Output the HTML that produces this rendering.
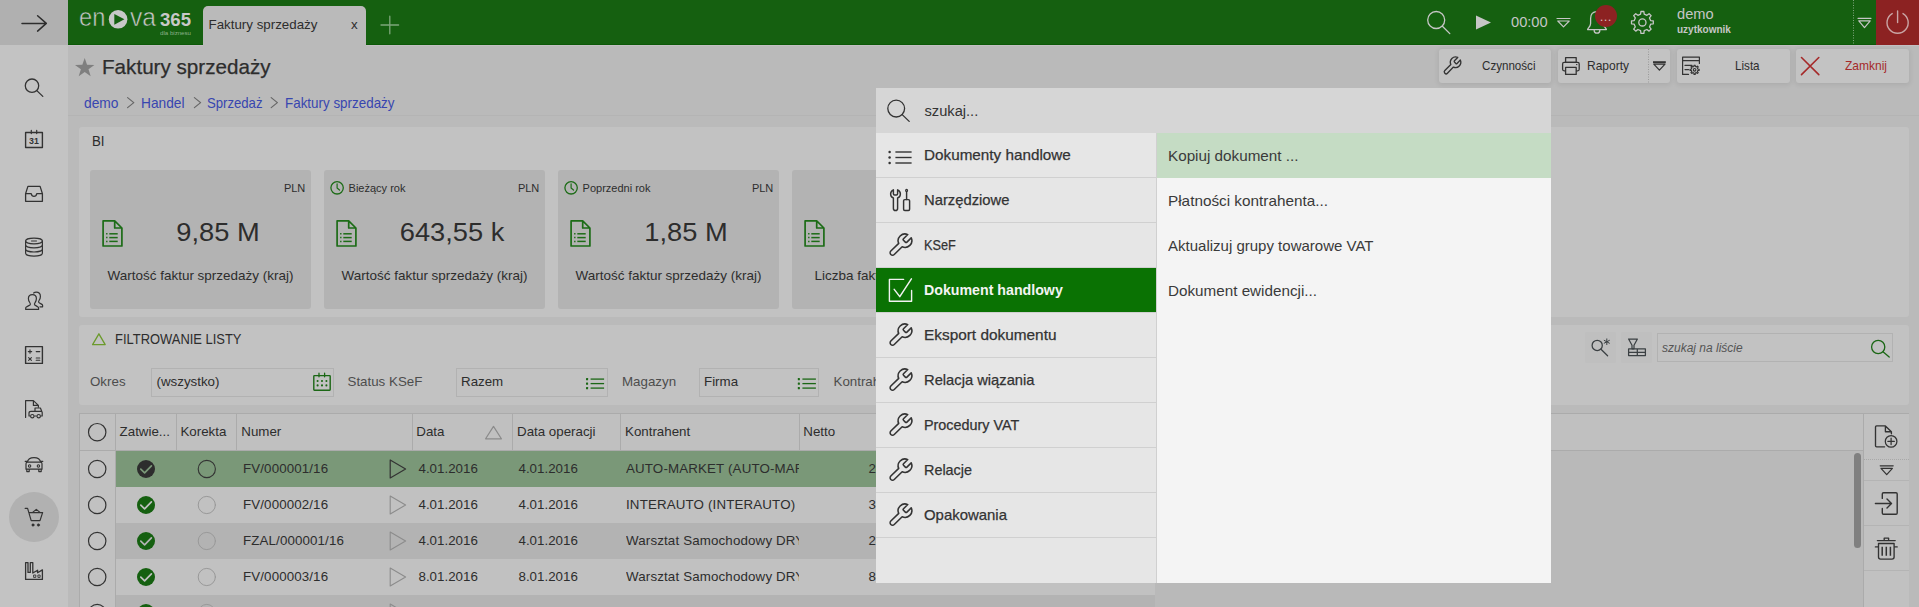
<!DOCTYPE html>
<html lang="pl">
<head>
<meta charset="utf-8">
<title>Faktury sprzedaży</title>
<style>
*{box-sizing:border-box;margin:0;padding:0}
html,body{width:1919px;height:607px;overflow:hidden;background:#bababa;font-family:"Liberation Sans",sans-serif;color:#2d2d2d}
svg{position:absolute;left:0;top:0;overflow:visible}
span,div{font-kerning:normal}
</style>
</head>
<body>
<div id="app" style="position:absolute;left:0;top:0;width:1919px;height:607px;overflow:hidden">
<div style="position:absolute;left:0px;top:0px;width:68px;height:45px;background:#b0b0b0;"></div>
<div style="position:absolute;left:0px;top:45px;width:68px;height:562px;background:#c3c3c3;"></div>
<div style="position:absolute;left:68px;top:0px;width:1851px;height:45px;background:#156010;"></div>
<div style="position:absolute;left:203px;top:6px;width:163px;height:39px;background:#bababa;border-radius:5px 5px 0 0;"></div>
<div style="position:absolute;left:1876px;top:0px;width:43px;height:45px;background:#8c2222;"></div>
<div style="position:absolute;left:68px;top:44px;width:135px;height:1px;background:#0c5908;"></div>
<div style="position:absolute;left:366px;top:44px;width:1510px;height:1px;background:#0c5908;"></div>
<div style="position:absolute;left:68px;top:45px;width:135px;height:1px;background:#c3c0c3;"></div>
<div style="position:absolute;left:366px;top:45px;width:1553px;height:1px;background:#c3c0c3;"></div>
<div style="position:absolute;left:9px;top:492px;width:50px;height:50px;background:#b1b1b1;border-radius:50%;"></div>
<div style="position:absolute;left:1439px;top:49px;width:112px;height:34px;background:#c3c3c3;border-radius:3px;box-shadow:0 1px 5px 1px rgba(0,0,0,0.08);"></div>
<div style="position:absolute;left:1558px;top:49px;width:112px;height:34px;background:#c3c3c3;border-radius:3px;box-shadow:0 1px 5px 1px rgba(0,0,0,0.08);"></div>
<div style="position:absolute;left:1677px;top:49px;width:113px;height:34px;background:#c3c3c3;border-radius:3px;box-shadow:0 1px 5px 1px rgba(0,0,0,0.08);"></div>
<div style="position:absolute;left:1796px;top:49px;width:113px;height:34px;background:#c3c3c3;border-radius:3px;box-shadow:0 1px 5px 1px rgba(0,0,0,0.08);"></div>
<div style="position:absolute;left:68px;top:115px;width:1851px;height:1px;background:#b4b4b4;"></div>
<div style="position:absolute;left:79px;top:127px;width:1830px;height:190px;background:#c2c2c2;border-radius:3px;"></div>
<div style="position:absolute;left:90px;top:170px;width:221px;height:138.6px;background:#b3b3b3;border-radius:3px;"></div>
<div style="position:absolute;left:324px;top:170px;width:221px;height:138.6px;background:#b3b3b3;border-radius:3px;"></div>
<div style="position:absolute;left:558px;top:170px;width:221px;height:138.6px;background:#b3b3b3;border-radius:3px;"></div>
<div style="position:absolute;left:792px;top:170px;width:221px;height:138.6px;background:#b3b3b3;border-radius:3px;"></div>
<div style="position:absolute;left:79px;top:325px;width:1830px;height:80px;background:#c2c2c2;border-radius:3px;"></div>
<div style="position:absolute;left:151px;top:368px;width:183px;height:29px;background:#c2c2c2;border:1px solid #b2b2b2;"></div>
<div style="position:absolute;left:456px;top:368px;width:152px;height:29px;background:#c2c2c2;border:1px solid #b2b2b2;"></div>
<div style="position:absolute;left:699px;top:368px;width:120px;height:29px;background:#c2c2c2;border:1px solid #b2b2b2;"></div>
<div style="position:absolute;left:1585px;top:332px;width:31px;height:31px;background:#bfbfbf;border-radius:2px;"></div>
<div style="position:absolute;left:1621px;top:332px;width:31px;height:31px;background:#bfbfbf;border-radius:2px;"></div>
<div style="position:absolute;left:1657px;top:333px;width:236px;height:29px;background:#c2c2c2;border:1px solid #b2b2b2;"></div>
<div style="position:absolute;left:79px;top:413px;width:1830px;height:194px;background:#c1c1c1;"></div>
<div style="position:absolute;left:116px;top:451px;width:1747px;height:156px;background:#b9b9b9;"></div>
<div style="position:absolute;left:80px;top:414px;width:1783px;height:36px;background:#c0c0c0;"></div>
<div style="position:absolute;left:116px;top:451px;width:1039px;height:36px;background:#7a9878;"></div>
<div style="position:absolute;left:116px;top:487px;width:1039px;height:36px;background:#c1c1c1;"></div>
<div style="position:absolute;left:116px;top:523px;width:1039px;height:36px;background:#b3b3b3;"></div>
<div style="position:absolute;left:116px;top:559px;width:1039px;height:36px;background:#c1c1c1;"></div>
<div style="position:absolute;left:116px;top:595px;width:1039px;height:36px;background:#b3b3b3;"></div>
<div style="position:absolute;left:79px;top:413px;width:1830px;height:1px;background:#ababab;"></div>
<div style="position:absolute;left:79px;top:413px;width:1px;height:194px;background:#ababab;"></div>
<div style="position:absolute;left:80px;top:450px;width:1783px;height:1px;background:#ababab;"></div>
<div style="position:absolute;left:1863px;top:413px;width:1px;height:194px;background:#ababab;"></div>
<div style="position:absolute;left:115px;top:414px;width:1px;height:36px;background:#ababab;"></div>
<div style="position:absolute;left:176px;top:414px;width:1px;height:36px;background:#ababab;"></div>
<div style="position:absolute;left:236px;top:414px;width:1px;height:36px;background:#ababab;"></div>
<div style="position:absolute;left:412px;top:414px;width:1px;height:36px;background:#ababab;"></div>
<div style="position:absolute;left:512px;top:414px;width:1px;height:36px;background:#ababab;"></div>
<div style="position:absolute;left:620px;top:414px;width:1px;height:36px;background:#ababab;"></div>
<div style="position:absolute;left:799px;top:414px;width:1px;height:36px;background:#ababab;"></div>
<div style="position:absolute;left:115px;top:451px;width:1px;height:156px;background:#ababab;"></div>
<div style="position:absolute;left:1864px;top:459px;width:45px;height:1px;background:transparent;border-top:1px dotted #a8a8a8;"></div>
<div style="position:absolute;left:1864px;top:480px;width:45px;height:1px;background:#b4b4b4;"></div>
<div style="position:absolute;left:1864px;top:525px;width:45px;height:1px;background:#b4b4b4;"></div>
<div style="position:absolute;left:1864px;top:570px;width:45px;height:1px;background:#b4b4b4;"></div>
<div style="position:absolute;left:1854px;top:453px;width:7px;height:95px;background:#808080;border-radius:3.5px;"></div>
<span id="t1" style="position:absolute;left:79px;top:5.34px;font-size:25px;line-height:1;white-space:nowrap;color:#c8c8c8;transform-origin:0 0;transform:scaleX(0.9492);-webkit-text-stroke:0.55px #156010;">en</span>
<span id="t2" style="position:absolute;left:130px;top:5.34px;font-size:25px;line-height:1;white-space:nowrap;color:#c8c8c8;transform-origin:0 0;transform:scaleX(0.9846);-webkit-text-stroke:0.55px #156010;">va</span>
<span id="t3" style="position:absolute;left:160px;top:11.09px;font-size:18.2px;line-height:1;white-space:nowrap;color:#c8c8c8;font-weight:700;transform-origin:0 0;transform:scaleX(1.0211);">365</span>
<span id="t4" style="position:absolute;left:160px;top:29.52px;font-size:6px;line-height:1;white-space:nowrap;color:#8db18a;transform-origin:0 0;transform:scaleX(1.0211);">dla biznesu</span>
<span id="t5" style="position:absolute;left:208.5px;top:17.72px;font-size:13.33px;line-height:1;white-space:nowrap;color:#2d2d2d;transform-origin:0 0;">Faktury sprzedaży</span>
<span id="t6" style="position:absolute;left:351px;top:17.72px;font-size:13.33px;line-height:1;white-space:nowrap;color:#2d2d2d;transform-origin:0 0;">x</span>
<span id="t7" style="position:absolute;left:1511px;top:15.18px;font-size:14.67px;line-height:1;white-space:nowrap;color:#c6c6c6;transform-origin:0 0;">00:00</span>
<span id="t8" style="position:absolute;left:1677px;top:7.48px;font-size:14.67px;line-height:1;white-space:nowrap;color:#c6c6c6;transform-origin:0 0;">demo</span>
<span id="t9" style="position:absolute;left:1677px;top:25.04px;font-size:10px;line-height:1;white-space:nowrap;color:#c6c6c6;font-weight:700;transform-origin:0 0;">uzytkownik</span>
<span id="t11" style="position:absolute;left:102.3px;top:56.56px;font-size:20.6px;line-height:1;white-space:nowrap;color:#2d2d2d;transform-origin:0 0;transform:scaleX(1.0021);-webkit-text-stroke:0.25px #2d2d2d;">Faktury sprzedaży</span>
<span id="t12" style="position:absolute;left:83.5px;top:95.73px;font-size:14.5px;line-height:1;white-space:nowrap;color:#3846b0;transform-origin:0 0;transform:scaleX(0.9509);">demo</span>
<span id="t13" style="position:absolute;left:141px;top:95.73px;font-size:14.5px;line-height:1;white-space:nowrap;color:#3846b0;transform-origin:0 0;transform:scaleX(0.9466);">Handel</span>
<span id="t14" style="position:absolute;left:207px;top:95.73px;font-size:14.5px;line-height:1;white-space:nowrap;color:#3846b0;transform-origin:0 0;transform:scaleX(0.9059);">Sprzedaż</span>
<span id="t15" style="position:absolute;left:285px;top:95.73px;font-size:14.5px;line-height:1;white-space:nowrap;color:#3846b0;transform-origin:0 0;transform:scaleX(0.9243);">Faktury sprzedaży</span>
<span id="t16" style="position:absolute;left:1481.5px;top:59.00px;font-size:13px;line-height:1;white-space:nowrap;color:#2d2d2d;transform-origin:0 0;transform:scaleX(0.8921);">Czynności</span>
<span id="t17" style="position:absolute;left:1587.2px;top:59.00px;font-size:13px;line-height:1;white-space:nowrap;color:#2d2d2d;transform-origin:0 0;transform:scaleX(0.9224);">Raporty</span>
<span id="t18" style="position:absolute;left:1734.5px;top:59.00px;font-size:13px;line-height:1;white-space:nowrap;color:#2d2d2d;transform-origin:0 0;transform:scaleX(0.8956);">Lista</span>
<span id="t19" style="position:absolute;left:1844.5px;top:59.00px;font-size:13px;line-height:1;white-space:nowrap;color:#a52a2a;transform-origin:0 0;transform:scaleX(0.9228);">Zamknij</span>
<span id="t20" style="position:absolute;left:91.8px;top:133.73px;font-size:14.5px;line-height:1;white-space:nowrap;color:#2d2d2d;transform-origin:0 0;transform:scaleX(0.9122);">BI</span>
<span id="t21" style="position:absolute;right:1613.7px;top:182.69px;font-size:11px;line-height:1;white-space:nowrap;color:#2d2d2d;transform-origin:100% 0;">PLN</span>
<div style="position:absolute;left:126px;top:218.72px;width:184px;text-align:center;font-size:26.67px;line-height:1;white-space:nowrap;color:#2d2d2d;transform:scaleX(1.022)">9,85 M</div>
<div style="position:absolute;left:90px;top:269.42px;width:221px;text-align:center;font-size:13.33px;line-height:1;white-space:nowrap;color:#2d2d2d;transform:scaleX(1.01)">Wartość faktur sprzedaży (kraj)</div>
<span id="t22" style="position:absolute;right:1379.7px;top:182.69px;font-size:11px;line-height:1;white-space:nowrap;color:#2d2d2d;transform-origin:100% 0;">PLN</span>
<span id="t23" style="position:absolute;left:348.6px;top:182.69px;font-size:11px;line-height:1;white-space:nowrap;color:#2d2d2d;transform-origin:0 0;">Bieżący rok</span>
<div style="position:absolute;left:360px;top:218.72px;width:184px;text-align:center;font-size:26.67px;line-height:1;white-space:nowrap;color:#2d2d2d;transform:scaleX(1.022)">643,55 k</div>
<div style="position:absolute;left:324px;top:269.42px;width:221px;text-align:center;font-size:13.33px;line-height:1;white-space:nowrap;color:#2d2d2d;transform:scaleX(1.01)">Wartość faktur sprzedaży (kraj)</div>
<span id="t24" style="position:absolute;right:1145.7px;top:182.69px;font-size:11px;line-height:1;white-space:nowrap;color:#2d2d2d;transform-origin:100% 0;">PLN</span>
<span id="t25" style="position:absolute;left:582.6px;top:182.69px;font-size:11px;line-height:1;white-space:nowrap;color:#2d2d2d;transform-origin:0 0;">Poprzedni rok</span>
<div style="position:absolute;left:594px;top:218.72px;width:184px;text-align:center;font-size:26.67px;line-height:1;white-space:nowrap;color:#2d2d2d;transform:scaleX(1.022)">1,85 M</div>
<div style="position:absolute;left:558px;top:269.42px;width:221px;text-align:center;font-size:13.33px;line-height:1;white-space:nowrap;color:#2d2d2d;transform:scaleX(1.01)">Wartość faktur sprzedaży (kraj)</div>
<span id="t26" style="position:absolute;right:911.7px;top:182.69px;font-size:11px;line-height:1;white-space:nowrap;color:#2d2d2d;transform-origin:100% 0;">PLN</span>
<div style="position:absolute;left:792px;top:269.42px;width:221px;text-align:center;font-size:13.33px;line-height:1;white-space:nowrap;color:#2d2d2d;transform:scaleX(1.01)">Liczba faktur sprzedaży (kraj)</div>
<span id="t27" style="position:absolute;left:114.5px;top:332.03px;font-size:14.5px;line-height:1;white-space:nowrap;color:#2d2d2d;transform-origin:0 0;transform:scaleX(0.8921);">FILTROWANIE LISTY</span>
<span id="t28" style="position:absolute;left:90px;top:375.42px;font-size:13.33px;line-height:1;white-space:nowrap;color:#4d4d4d;transform-origin:0 0;">Okres</span>
<span id="t29" style="position:absolute;left:156.5px;top:375.42px;font-size:13.33px;line-height:1;white-space:nowrap;color:#2d2d2d;transform-origin:0 0;">(wszystko)</span>
<span id="t30" style="position:absolute;left:347.5px;top:375.42px;font-size:13.33px;line-height:1;white-space:nowrap;color:#4d4d4d;transform-origin:0 0;">Status KSeF</span>
<span id="t31" style="position:absolute;left:461px;top:375.42px;font-size:13.33px;line-height:1;white-space:nowrap;color:#2d2d2d;transform-origin:0 0;">Razem</span>
<span id="t32" style="position:absolute;left:622px;top:375.42px;font-size:13.33px;line-height:1;white-space:nowrap;color:#4d4d4d;transform-origin:0 0;">Magazyn</span>
<span id="t33" style="position:absolute;left:704px;top:375.42px;font-size:13.33px;line-height:1;white-space:nowrap;color:#2d2d2d;transform-origin:0 0;">Firma</span>
<span id="t34" style="position:absolute;left:833.5px;top:375.42px;font-size:13.33px;line-height:1;white-space:nowrap;color:#4d4d4d;transform-origin:0 0;">Kontrahent</span>
<span id="t35" style="position:absolute;left:1662px;top:342.14px;font-size:12px;line-height:1;white-space:nowrap;color:#555;font-style:italic;transform-origin:0 0;">szukaj na liście</span>
<span id="t36" style="position:absolute;left:119.6px;top:425.02px;font-size:13.33px;line-height:1;white-space:nowrap;color:#2d2d2d;transform-origin:0 0;">Zatwie...</span>
<span id="t37" style="position:absolute;left:180.4px;top:425.02px;font-size:13.33px;line-height:1;white-space:nowrap;color:#2d2d2d;transform-origin:0 0;">Korekta</span>
<span id="t38" style="position:absolute;left:241.3px;top:425.02px;font-size:13.33px;line-height:1;white-space:nowrap;color:#2d2d2d;transform-origin:0 0;">Numer</span>
<span id="t39" style="position:absolute;left:416.3px;top:425.02px;font-size:13.33px;line-height:1;white-space:nowrap;color:#2d2d2d;transform-origin:0 0;">Data</span>
<span id="t40" style="position:absolute;left:517px;top:425.02px;font-size:13.33px;line-height:1;white-space:nowrap;color:#2d2d2d;transform-origin:0 0;">Data operacji</span>
<span id="t41" style="position:absolute;left:625px;top:425.02px;font-size:13.33px;line-height:1;white-space:nowrap;color:#2d2d2d;transform-origin:0 0;">Kontrahent</span>
<span id="t42" style="position:absolute;left:803.3px;top:425.02px;font-size:13.33px;line-height:1;white-space:nowrap;color:#2d2d2d;transform-origin:0 0;">Netto</span>
<span id="t43" style="position:absolute;left:243px;top:461.52px;font-size:13.33px;line-height:1;white-space:nowrap;color:#2d2d2d;transform-origin:0 0;letter-spacing:0.12px;">FV/000001/16</span>
<span id="t44" style="position:absolute;left:418.5px;top:461.52px;font-size:13.33px;line-height:1;white-space:nowrap;color:#2d2d2d;transform-origin:0 0;">4.01.2016</span>
<span id="t45" style="position:absolute;left:518.5px;top:461.52px;font-size:13.33px;line-height:1;white-space:nowrap;color:#2d2d2d;transform-origin:0 0;">4.01.2016</span>
<div style="position:absolute;left:626px;top:458.52px;width:173.4px;height:22px;overflow:hidden"><span style="position:absolute;left:0;top:3px;font-size:13.33px;line-height:1;white-space:nowrap;letter-spacing:0.15px;color:#2d2d2d">AUTO-MARKET (AUTO-MARKET)</span></div>
<span id="t46" style="position:absolute;left:868.5px;top:461.52px;font-size:13.33px;line-height:1;white-space:nowrap;color:#2d2d2d;transform-origin:0 0;">245,00</span>
<span id="t47" style="position:absolute;left:243px;top:497.52px;font-size:13.33px;line-height:1;white-space:nowrap;color:#2d2d2d;transform-origin:0 0;letter-spacing:0.12px;">FV/000002/16</span>
<span id="t48" style="position:absolute;left:418.5px;top:497.52px;font-size:13.33px;line-height:1;white-space:nowrap;color:#2d2d2d;transform-origin:0 0;">4.01.2016</span>
<span id="t49" style="position:absolute;left:518.5px;top:497.52px;font-size:13.33px;line-height:1;white-space:nowrap;color:#2d2d2d;transform-origin:0 0;">4.01.2016</span>
<div style="position:absolute;left:626px;top:494.52px;width:173.4px;height:22px;overflow:hidden"><span style="position:absolute;left:0;top:3px;font-size:13.33px;line-height:1;white-space:nowrap;letter-spacing:0.15px;color:#2d2d2d">INTERAUTO (INTERAUTO)</span></div>
<span id="t50" style="position:absolute;left:868.5px;top:497.52px;font-size:13.33px;line-height:1;white-space:nowrap;color:#2d2d2d;transform-origin:0 0;">345,00</span>
<span id="t51" style="position:absolute;left:243px;top:533.52px;font-size:13.33px;line-height:1;white-space:nowrap;color:#2d2d2d;transform-origin:0 0;letter-spacing:0.12px;">FZAL/000001/16</span>
<span id="t52" style="position:absolute;left:418.5px;top:533.52px;font-size:13.33px;line-height:1;white-space:nowrap;color:#2d2d2d;transform-origin:0 0;">4.01.2016</span>
<span id="t53" style="position:absolute;left:518.5px;top:533.52px;font-size:13.33px;line-height:1;white-space:nowrap;color:#2d2d2d;transform-origin:0 0;">4.01.2016</span>
<div style="position:absolute;left:626px;top:530.52px;width:173.4px;height:22px;overflow:hidden"><span style="position:absolute;left:0;top:3px;font-size:13.33px;line-height:1;white-space:nowrap;letter-spacing:0.15px;color:#2d2d2d">Warsztat Samochodowy DRYNDA</span></div>
<span id="t54" style="position:absolute;left:868.5px;top:533.52px;font-size:13.33px;line-height:1;white-space:nowrap;color:#2d2d2d;transform-origin:0 0;">245,00</span>
<span id="t55" style="position:absolute;left:243px;top:569.52px;font-size:13.33px;line-height:1;white-space:nowrap;color:#2d2d2d;transform-origin:0 0;letter-spacing:0.12px;">FV/000003/16</span>
<span id="t56" style="position:absolute;left:418.5px;top:569.52px;font-size:13.33px;line-height:1;white-space:nowrap;color:#2d2d2d;transform-origin:0 0;">8.01.2016</span>
<span id="t57" style="position:absolute;left:518.5px;top:569.52px;font-size:13.33px;line-height:1;white-space:nowrap;color:#2d2d2d;transform-origin:0 0;">8.01.2016</span>
<div style="position:absolute;left:626px;top:566.52px;width:173.4px;height:22px;overflow:hidden"><span style="position:absolute;left:0;top:3px;font-size:13.33px;line-height:1;white-space:nowrap;letter-spacing:0.15px;color:#2d2d2d">Warsztat Samochodowy DRYNDA</span></div>
<span id="t58" style="position:absolute;left:868.5px;top:569.52px;font-size:13.33px;line-height:1;white-space:nowrap;color:#2d2d2d;transform-origin:0 0;">845,00</span>
<span id="t59" style="position:absolute;left:243px;top:605.52px;font-size:13.33px;line-height:1;white-space:nowrap;color:#2d2d2d;transform-origin:0 0;letter-spacing:0.12px;">FV/000004/16</span>
<span id="t60" style="position:absolute;left:418.5px;top:605.52px;font-size:13.33px;line-height:1;white-space:nowrap;color:#2d2d2d;transform-origin:0 0;">8.01.2016</span>
<span id="t61" style="position:absolute;left:518.5px;top:605.52px;font-size:13.33px;line-height:1;white-space:nowrap;color:#2d2d2d;transform-origin:0 0;">8.01.2016</span>
<div style="position:absolute;left:626px;top:602.52px;width:173.4px;height:22px;overflow:hidden"><span style="position:absolute;left:0;top:3px;font-size:13.33px;line-height:1;white-space:nowrap;letter-spacing:0.15px;color:#2d2d2d">AUTO-MARKET (AUTO-MARKET)</span></div>
<span id="t62" style="position:absolute;left:868.5px;top:605.52px;font-size:13.33px;line-height:1;white-space:nowrap;color:#2d2d2d;transform-origin:0 0;">145,00</span>
<span id="t63" style="position:absolute;left:29.4px;top:135.84px;font-size:9.4px;line-height:1;white-space:nowrap;color:#333;font-weight:700;transform-origin:0 0;transform:scaleX(0.9389);">31</span>
<svg width="1919" height="607" viewBox="0 0 1919 607" fill="none" stroke-linecap="round" stroke-linejoin="round">
<path d="M22 23.4 H46.3 M37.6 15.7 L46.3 23.4 L37.6 31.1" stroke="#2d2d2d" stroke-width="1.5" fill="none" />
<circle cx="32" cy="85.7" r="6.7" stroke="#333" stroke-width="1.3" fill="none"/><path d="M36.8 90.6 L42.8 96.4" stroke="#333" stroke-width="1.3" fill="none" />
<rect x="25.6" y="132.5" width="16.8" height="15" rx="0" stroke="#333" stroke-width="1.4" fill="none"/><path d="M31.3 130.3 V133.6 M36.7 130.3 V133.6" stroke="#333" stroke-width="1.2" fill="none" />
<path d="M25.6 193.6 L27.9 186.4 H40.1 L42.4 193.6 V201.3 H25.6 Z M25.6 193.6 H31.2 C31.6 195.6 32.6 196.4 34 196.4 C35.4 196.4 36.4 195.6 36.8 193.6 H42.4" stroke="#333" stroke-width="1.3" fill="none" />
<ellipse cx="34" cy="241" rx="8.4" ry="2.8" stroke="#333" stroke-width="1.2"/><path d="M25.6 241.0 V245.1 A8.4 2.8 0 0 0 42.4 245.1 V241.0" stroke="#333" stroke-width="1.2" fill="none" /><path d="M25.6 245.1 V249.2 A8.4 2.8 0 0 0 42.4 249.2 V245.1" stroke="#333" stroke-width="1.2" fill="none" /><path d="M25.6 249.2 V253.3 A8.4 2.8 0 0 0 42.4 253.3 V249.2" stroke="#333" stroke-width="1.2" fill="none" /><path d="M31.5 241 H36.5" stroke="#333" stroke-width="1" fill="none" />
<path d="M25.7 309.4 V307.8 C25.7 306.6 29.6 305.9 30.3 304.6 C30.6 304 30.3 303.4 29.6 302.3 C28.6 300.8 28.4 299.6 28.4 298.6 C28.4 296.2 30 294.6 32.4 294.6 C34.8 294.6 36.4 296.2 36.4 298.6 C36.4 299.6 36.2 300.8 35.2 302.3 C34.5 303.4 34.2 304 34.5 304.6 C35.2 305.9 38.6 306.6 38.6 307.8 V309.4 Z" stroke="#333" stroke-width="1.2" fill="none" />
<path d="M33.6 293 C34.4 292.4 35.3 292.2 36.2 292.2 C38.8 292.2 40.4 293.9 40.4 296.4 C40.4 297.6 40.2 298.6 39.3 300 C38.6 301.1 38.4 301.7 38.7 302.3 C39.3 303.5 42.6 304 42.6 305.3 V306.8 H40" stroke="#333" stroke-width="1.2" fill="none" />
<rect x="25.6" y="346.6" width="16.8" height="16.8" rx="0" stroke="#333" stroke-width="1.4" fill="none"/>
<path d="M28.3 351.6 H31.7 M30 349.9 V353.3 M36.2 351.6 H39.8 M28.6 357.6 L31.4 360.4 M31.4 357.6 L28.6 360.4 M36.2 358 H39.8 M36.2 360.2 H39.8" stroke="#333" stroke-width="1.1" fill="none" />
<path d="M25.6 417.4 V400.6 H33.4 L38.4 405.4 M33.4 400.6 V405.4 H38.4 V407.2" stroke="#333" stroke-width="1.2" fill="none" />
<path d="M35 408 H40.4 L42.2 412.5 V416 H41 M30 416 H29 V413.2 C29 411.8 30 411.4 31 411.4 H35 V408 M34.6 416 H36.4 M35.6 411.4 H41.7" stroke="#333" stroke-width="1.2" fill="none" />
<circle cx="32.3" cy="416.2" r="1.7" stroke="#333" stroke-width="1.1" fill="none"/><circle cx="38.7" cy="416.2" r="1.7" stroke="#333" stroke-width="1.1" fill="none"/>
<path d="M27.2 462.4 C28 458.6 30 457.6 34 457.6 C38 457.6 40 458.6 40.8 462.4 M25.2 461.3 H27 M41 461.3 H42.8 M26 469.2 V463.8 C26 462.6 26.6 462.2 27.6 462.2 H40.4 C41.4 462.2 42 462.6 42 463.8 V469.2 Z M26.8 469.2 V471.6 H29.2 V469.2 M38.8 469.2 V471.6 H41.2 V469.2" stroke="#333" stroke-width="1.2" fill="none" />
<circle cx="29.6" cy="466" r="1.2" stroke="#333" stroke-width="1.1" fill="none"/><circle cx="38.4" cy="466" r="1.2" stroke="#333" stroke-width="1.1" fill="none"/>
<path d="M25.2 508.4 H27.6 L31.2 520.6 H40 L42.6 512.6 H28.8 M32.6 512.4 L36.3 509.4 L40 512.4" stroke="#333" stroke-width="1.2" fill="none" />
<circle cx="33" cy="525" r="1.2" stroke="#333" stroke-width="0.5" fill="#333"/><circle cx="38.4" cy="525" r="1.2" stroke="#333" stroke-width="0.5" fill="#333"/>
<path d="M25.6 579.4 V562.6 H28 V572.4 H30.3 V562.6 H32.8 V573 L37.6 570.2 V572.8 L42.4 569.9 V579.4 Z" stroke="#333" stroke-width="1.3" fill="none" />
<rect x="34" y="575" width="1.8" height="2.4" rx="0" stroke="#333" stroke-width="0.9" fill="none"/><rect x="38.3" y="575" width="1.8" height="2.4" rx="0" stroke="#333" stroke-width="0.9" fill="none"/>
<circle cx="118.1" cy="19.3" r="9.3" fill="#c8c8c8"/><path d="M114.3 13.9 L124.4 19.3 L114.3 24.8 Z" fill="#156010"/>
<path d="M381 25 H398.6 M389.8 16.2 V33.8" stroke="#7ea67b" stroke-width="1.3" fill="none" />
<circle cx="1436.2" cy="20" r="8.5" stroke="#c6c6c6" stroke-width="1.3" fill="none"/><path d="M1442.4 26.2 L1449.8 33.6" stroke="#c6c6c6" stroke-width="1.3" fill="none" />
<path d="M1476 15.4 L1491 22.5 L1476 29.6 Z" fill="#c6c6c6"/>
<path d="M1557 18.5 H1570" stroke="#c6c6c6" stroke-width="1.2" fill="none" /><path d="M1557.8 21 H1569.2 L1563.5 26.8 Z" stroke="#c6c6c6" stroke-width="1.2" fill="none" />
<path d="M1597 11.6 C1592.6 11.6 1590.6 14.8 1590.6 18.6 V23.4 C1590.6 26 1588.6 27.6 1587.6 29.6 H1606.4 C1605.4 27.6 1603.4 26 1603.4 23.4 V18.6 C1603.4 14.8 1601.4 11.6 1597 11.6 Z M1594.2 30.4 C1594.2 32 1595.4 33.2 1597 33.2 C1598.6 33.2 1599.8 32 1599.8 30.4" stroke="#c6c6c6" stroke-width="1.3" fill="none" />
<circle cx="1606" cy="16" r="11" fill="#8c2222"/>
<path d="M1640.57 14.20 L1640.94 11.50 L1643.86 11.50 L1644.23 14.20 L1646.90 15.31 L1649.07 13.66 L1651.14 15.73 L1649.49 17.90 L1650.60 20.57 L1653.30 20.94 L1653.30 23.86 L1650.60 24.23 L1649.49 26.90 L1651.14 29.07 L1649.07 31.14 L1646.90 29.49 L1644.23 30.60 L1643.86 33.30 L1640.94 33.30 L1640.57 30.60 L1637.90 29.49 L1635.73 31.14 L1633.66 29.07 L1635.31 26.90 L1634.20 24.23 L1631.50 23.86 L1631.50 20.94 L1634.20 20.57 L1635.31 17.90 L1633.66 15.73 L1635.73 13.66 L1637.90 15.31Z" stroke="#c6c6c6" stroke-width="1.3" fill="none" stroke-linejoin="round"/><circle cx="1642.4" cy="22.4" r="3.6" stroke="#c6c6c6" stroke-width="1.3" fill="none"/>
<path d="M1853.5 0 V45" stroke="#7fa57c" stroke-width="1" fill="none" stroke-dasharray="1 1.5" stroke-linecap="butt"/>
<path d="M1858 18.3 H1871" stroke="#c6c6c6" stroke-width="1.2" fill="none" /><path d="M1858.8 20.8 H1870.2 L1864.5 27.6 Z" stroke="#c6c6c6" stroke-width="1.2" fill="none" />
<path d="M1892.2 13.6 A10.6 10.6 0 1 0 1903 13.6 M1897.6 10.9 V22.6" stroke="#c9a5a5" stroke-width="1.4" fill="none" />
<g transform="translate(1441.69 55.15) scale(0.8673 0.8878)"><path d="M14.7 6.3a1 1 0 0 0 0 1.4l1.6 1.6a1 1 0 0 0 1.4 0l3.77-3.77a6 6 0 0 1-7.94 7.94l-6.91 6.91a2.12 2.12 0 0 1-3-3l6.91-6.91a6 6 0 0 1 7.94-7.94l-3.76 3.76z" stroke="#333" stroke-width="1.556" fill="none"/></g>
<rect x="1562.6" y="62.4" width="16.6" height="8.4" rx="1.5" stroke="#333" stroke-width="1.3" fill="none"/><rect x="1565.6" y="57.6" width="10.6" height="4.8" rx="0" stroke="#333" stroke-width="1.3" fill="none"/><rect x="1565.6" y="67.4" width="10.6" height="7" rx="0" stroke="#333" stroke-width="1.3" fill="#c3c3c3"/><path d="M1576.4 64.6 H1577" stroke="#333" stroke-width="1" fill="none" />
<path d="M1648.5 49 V83" stroke="#999" stroke-width="1" fill="none" stroke-dasharray="1 1.5" stroke-linecap="butt"/>
<path d="M1653 62.2 H1665.8" stroke="#333" stroke-width="2" fill="none" stroke-linecap="butt"/><path d="M1653.8 64.2 H1665 L1659.4 70.2 Z" stroke="#333" stroke-width="1.2" fill="none" />
<path d="M1699.4 63.5 V57.2 H1682.6 V74.4 H1688.5 M1682.6 60.6 H1699.4 M1685 65.4 H1692 M1685 69.6 H1688.6" stroke="#333" stroke-width="1.2" fill="none" />
<path d="M1693.88 66.58 L1693.99 65.24 L1695.21 65.24 L1695.32 66.58 L1696.37 67.01 L1697.39 66.14 L1698.26 67.01 L1697.39 68.03 L1697.82 69.08 L1699.16 69.19 L1699.16 70.41 L1697.82 70.52 L1697.39 71.57 L1698.26 72.59 L1697.39 73.46 L1696.37 72.59 L1695.32 73.02 L1695.21 74.36 L1693.99 74.36 L1693.88 73.02 L1692.83 72.59 L1691.81 73.46 L1690.94 72.59 L1691.81 71.57 L1691.38 70.52 L1690.04 70.41 L1690.04 69.19 L1691.38 69.08 L1691.81 68.03 L1690.94 67.01 L1691.81 66.14 L1692.83 67.01Z" stroke="#333" stroke-width="1.1" fill="none" stroke-linejoin="round"/><circle cx="1694.6" cy="69.8" r="1.3" stroke="#333" stroke-width="1.1" fill="none"/>
<path d="M1801.5 57.5 L1818.8 74.6 M1818.8 57.5 L1801.5 74.6" stroke="#a52a2a" stroke-width="1.6" fill="none" />
<path d="M84.70 57.90 L87.05 64.86 L94.40 64.95 L88.50 69.34 L90.70 76.35 L84.70 72.10 L78.70 76.35 L80.90 69.34 L75.00 64.95 L82.35 64.86Z" fill="#7f7f7f"/>
<path d="M127.6 97.6 L133.79999999999998 102.6 L127.6 107.6" stroke="#666" stroke-width="1.2" fill="none" />
<path d="M194.4 97.6 L200.6 102.6 L194.4 107.6" stroke="#666" stroke-width="1.2" fill="none" />
<path d="M271.2 97.6 L277.4 102.6 L271.2 107.6" stroke="#666" stroke-width="1.2" fill="none" />
<path d="M103.1 220.8 H114.7 L121.9 228 V246 H103.1 Z M114.7 220.8 V228 H121.9" stroke="#1d6c17" stroke-width="1.7" fill="none" />
<path d="M109.3 233.8 H117.7" stroke="#1d6c17" stroke-width="1.5" fill="none" stroke-linecap="butt"/><path d="M106.1 233.8 H107.5" stroke="#1d6c17" stroke-width="1.5" fill="none" stroke-linecap="butt"/>
<path d="M109.3 237.6 H117.7" stroke="#1d6c17" stroke-width="1.5" fill="none" stroke-linecap="butt"/><path d="M106.1 237.6 H107.5" stroke="#1d6c17" stroke-width="1.5" fill="none" stroke-linecap="butt"/>
<path d="M109.3 241.4 H117.7" stroke="#1d6c17" stroke-width="1.5" fill="none" stroke-linecap="butt"/><path d="M106.1 241.4 H107.5" stroke="#1d6c17" stroke-width="1.5" fill="none" stroke-linecap="butt"/>
<path d="M337.1 220.8 H348.7 L355.90000000000003 228 V246 H337.1 Z M348.7 220.8 V228 H355.90000000000003" stroke="#1d6c17" stroke-width="1.7" fill="none" />
<path d="M343.3 233.8 H351.7" stroke="#1d6c17" stroke-width="1.5" fill="none" stroke-linecap="butt"/><path d="M340.1 233.8 H341.5" stroke="#1d6c17" stroke-width="1.5" fill="none" stroke-linecap="butt"/>
<path d="M343.3 237.6 H351.7" stroke="#1d6c17" stroke-width="1.5" fill="none" stroke-linecap="butt"/><path d="M340.1 237.6 H341.5" stroke="#1d6c17" stroke-width="1.5" fill="none" stroke-linecap="butt"/>
<path d="M343.3 241.4 H351.7" stroke="#1d6c17" stroke-width="1.5" fill="none" stroke-linecap="butt"/><path d="M340.1 241.4 H341.5" stroke="#1d6c17" stroke-width="1.5" fill="none" stroke-linecap="butt"/>
<path d="M571.0999999999999 220.8 H582.6999999999999 L589.9 228 V246 H571.0999999999999 Z M582.6999999999999 220.8 V228 H589.9" stroke="#1d6c17" stroke-width="1.7" fill="none" />
<path d="M577.3 233.8 H585.6999999999999" stroke="#1d6c17" stroke-width="1.5" fill="none" stroke-linecap="butt"/><path d="M574.0999999999999 233.8 H575.5" stroke="#1d6c17" stroke-width="1.5" fill="none" stroke-linecap="butt"/>
<path d="M577.3 237.6 H585.6999999999999" stroke="#1d6c17" stroke-width="1.5" fill="none" stroke-linecap="butt"/><path d="M574.0999999999999 237.6 H575.5" stroke="#1d6c17" stroke-width="1.5" fill="none" stroke-linecap="butt"/>
<path d="M577.3 241.4 H585.6999999999999" stroke="#1d6c17" stroke-width="1.5" fill="none" stroke-linecap="butt"/><path d="M574.0999999999999 241.4 H575.5" stroke="#1d6c17" stroke-width="1.5" fill="none" stroke-linecap="butt"/>
<path d="M805.0999999999999 220.8 H816.6999999999999 L823.9 228 V246 H805.0999999999999 Z M816.6999999999999 220.8 V228 H823.9" stroke="#1d6c17" stroke-width="1.7" fill="none" />
<path d="M811.3 233.8 H819.6999999999999" stroke="#1d6c17" stroke-width="1.5" fill="none" stroke-linecap="butt"/><path d="M808.0999999999999 233.8 H809.5" stroke="#1d6c17" stroke-width="1.5" fill="none" stroke-linecap="butt"/>
<path d="M811.3 237.6 H819.6999999999999" stroke="#1d6c17" stroke-width="1.5" fill="none" stroke-linecap="butt"/><path d="M808.0999999999999 237.6 H809.5" stroke="#1d6c17" stroke-width="1.5" fill="none" stroke-linecap="butt"/>
<path d="M811.3 241.4 H819.6999999999999" stroke="#1d6c17" stroke-width="1.5" fill="none" stroke-linecap="butt"/><path d="M808.0999999999999 241.4 H809.5" stroke="#1d6c17" stroke-width="1.5" fill="none" stroke-linecap="butt"/>
<circle cx="337.1" cy="187.8" r="6.2" stroke="#1d6c17" stroke-width="1.3" fill="none"/><path d="M337.1 183.8 V188 L339.5 190" stroke="#1d6c17" stroke-width="1.2" fill="none" />
<circle cx="571.1" cy="187.8" r="6.2" stroke="#1d6c17" stroke-width="1.3" fill="none"/><path d="M571.1 183.8 V188 L573.5 190" stroke="#1d6c17" stroke-width="1.2" fill="none" />
<path d="M92.6 344.6 H105.2 L98.9 333.8 Z" stroke="#6b9a2c" stroke-width="1.3" fill="none" />
<rect x="313.8" y="375.6" width="16.4" height="14.6" rx="0.6" stroke="#1b6715" stroke-width="1.4" fill="none"/><path d="M319 373.2 V376.8 M324.6 373.2 V376.8" stroke="#1b6715" stroke-width="1.3" fill="none" />
<circle cx="317.6" cy="381" r="1.05" fill="#1b6715"/>
<circle cx="322" cy="381" r="1.05" fill="#1b6715"/>
<circle cx="326.4" cy="381" r="1.05" fill="#1b6715"/>
<circle cx="317.6" cy="385.4" r="1.05" fill="#1b6715"/>
<circle cx="322" cy="385.4" r="1.05" fill="#1b6715"/>
<circle cx="326.4" cy="385.4" r="1.05" fill="#1b6715"/>
<path d="M590.6 379.1 H604.1" stroke="#1b6715" stroke-width="1.3" fill="none" stroke-linecap="butt"/><rect x="586" y="378.05" width="2.1" height="2.1" rx="0.5" fill="#1b6715"/>
<path d="M590.6 383.6 H604.1" stroke="#1b6715" stroke-width="1.3" fill="none" stroke-linecap="butt"/><rect x="586" y="382.55" width="2.1" height="2.1" rx="0.5" fill="#1b6715"/>
<path d="M590.6 388.1 H604.1" stroke="#1b6715" stroke-width="1.3" fill="none" stroke-linecap="butt"/><rect x="586" y="387.05" width="2.1" height="2.1" rx="0.5" fill="#1b6715"/>
<path d="M802.4 379.1 H815.9" stroke="#1b6715" stroke-width="1.3" fill="none" stroke-linecap="butt"/><rect x="797.8" y="378.05" width="2.1" height="2.1" rx="0.5" fill="#1b6715"/>
<path d="M802.4 383.6 H815.9" stroke="#1b6715" stroke-width="1.3" fill="none" stroke-linecap="butt"/><rect x="797.8" y="382.55" width="2.1" height="2.1" rx="0.5" fill="#1b6715"/>
<path d="M802.4 388.1 H815.9" stroke="#1b6715" stroke-width="1.3" fill="none" stroke-linecap="butt"/><rect x="797.8" y="387.05" width="2.1" height="2.1" rx="0.5" fill="#1b6715"/>
<circle cx="1597.2" cy="345.4" r="5.1" stroke="#3b4043" stroke-width="1.25" fill="none"/><path d="M1601 349.2 L1607.6 355.8" stroke="#3b4043" stroke-width="1.25" fill="none" /><path d="M1606.8 338.9 V344.6 M1604.2 340.4 L1609.4 343.2 M1609.4 340.4 L1604.2 343.2" stroke="#3b4043" stroke-width="1" fill="none" />
<path d="M1628.6 339 H1637.4 L1634 345.2 V348.8 H1632 V345.2 Z" stroke="#3b4043" stroke-width="1.25" fill="none" /><path d="M1628.6 348.9 H1645.4 V355.6 H1628.6 Z M1637.3 348.9 V355.6 M1628.6 352.3 H1645.4" stroke="#3b4043" stroke-width="1.25" fill="none" />
<circle cx="1878.2" cy="347" r="6.6" stroke="#1b6715" stroke-width="1.3" fill="none"/><path d="M1883 351.8 L1889.2 357" stroke="#1b6715" stroke-width="1.3" fill="none" />
<circle cx="97.2" cy="432.2" r="8.7" stroke="#333" stroke-width="1.2" fill="none"/>
<path d="M485.6 438.8 H501.4 L493.5 426.4 Z" stroke="#8a8a8a" stroke-width="1.2" fill="none" />
<circle cx="97.2" cy="469" r="8.7" stroke="#333" stroke-width="1.2" fill="none"/>
<circle cx="146" cy="469" r="9" fill="#2d2d2d"/><path d="M140.8 469.2 L144.6 472.8 L151.4 465.8" stroke="#7a9878" stroke-width="1.7" fill="none" />
<circle cx="206.8" cy="469" r="8.6" stroke="#333" stroke-width="1.1" fill="none"/>
<path d="M390.2 460 V478 L405.6 469 Z" stroke="#333" stroke-width="1.2" fill="none" />
<circle cx="97.2" cy="505" r="8.7" stroke="#333" stroke-width="1.2" fill="none"/>
<circle cx="146" cy="505" r="9" fill="#156010"/><path d="M140.8 505.2 L144.6 508.8 L151.4 501.8" stroke="#c1c1c1" stroke-width="1.7" fill="none" />
<circle cx="206.8" cy="505" r="8.6" stroke="#999" stroke-width="1" fill="none"/>
<path d="M390.2 496 V514 L405.6 505 Z" stroke="#8c8c8c" stroke-width="1.1" fill="none" />
<circle cx="97.2" cy="541" r="8.7" stroke="#333" stroke-width="1.2" fill="none"/>
<circle cx="146" cy="541" r="9" fill="#156010"/><path d="M140.8 541.2 L144.6 544.8 L151.4 537.8" stroke="#b3b3b3" stroke-width="1.7" fill="none" />
<circle cx="206.8" cy="541" r="8.6" stroke="#999" stroke-width="1" fill="none"/>
<path d="M390.2 532 V550 L405.6 541 Z" stroke="#8c8c8c" stroke-width="1.1" fill="none" />
<circle cx="97.2" cy="577" r="8.7" stroke="#333" stroke-width="1.2" fill="none"/>
<circle cx="146" cy="577" r="9" fill="#156010"/><path d="M140.8 577.2 L144.6 580.8 L151.4 573.8" stroke="#c1c1c1" stroke-width="1.7" fill="none" />
<circle cx="206.8" cy="577" r="8.6" stroke="#999" stroke-width="1" fill="none"/>
<path d="M390.2 568 V586 L405.6 577 Z" stroke="#8c8c8c" stroke-width="1.1" fill="none" />
<circle cx="97.2" cy="613" r="8.7" stroke="#333" stroke-width="1.2" fill="none"/>
<circle cx="146" cy="613" r="9" fill="#156010"/><path d="M140.8 613.2 L144.6 616.8 L151.4 609.8" stroke="#b3b3b3" stroke-width="1.7" fill="none" />
<circle cx="206.8" cy="613" r="8.6" stroke="#999" stroke-width="1" fill="none"/>
<path d="M390.2 604 V622 L405.6 613 Z" stroke="#8c8c8c" stroke-width="1.1" fill="none" />
<path d="M1885.4 425.9 H1876.6 Q1875.5 425.9 1875.5 427 V445.7 Q1875.5 446.8 1876.6 446.8 H1884.6 M1885.4 425.9 L1891.4 431.7 V433.8 M1885.4 425.9 V431.7 H1891.4" stroke="#333" stroke-width="1.35" fill="none" />
<circle cx="1891.1" cy="441.4" r="5.8" stroke="#333" stroke-width="1.25" fill="none"/><path d="M1887.9 441.4 H1894.3 M1891.1 438.2 V444.6" stroke="#333" stroke-width="1.25" fill="none" />
<path d="M1880.2 465.8 H1893.2" stroke="#333" stroke-width="1.2" fill="none" /><path d="M1881.0 468.3 H1892.4 L1886.7 474.6 Z" stroke="#333" stroke-width="1.2" fill="none" />
<path d="M1882.3 498.4 V494 Q1882.3 492.8 1883.5 492.8 H1896 Q1897.2 492.8 1897.2 494 V513 Q1897.2 514.2 1896 514.2 H1883.5 Q1882.3 514.2 1882.3 513 V508.4 M1875.4 503.5 H1891.2 M1887 499 L1891.5 503.5 L1887 508" stroke="#333" stroke-width="1.4" fill="none" />
<path d="M1877.4 540.6 H1895.2 M1884.2 540.4 V538.1 H1888.6 V540.4 M1878.5 543.5 H1894.1 M1878.5 543.5 V557 Q1878.5 559.1 1880.6 559.1 H1892 Q1894.1 559.1 1894.1 557 V543.5 M1875.4 546.9 H1878.4 M1894.2 546.9 H1897.2" stroke="#333" stroke-width="1.35" fill="none" />
<path d="M1882.2 546.8 V555.8 M1886.3 546.8 V555.8 M1890.4 546.8 V555.8" stroke="#333" stroke-width="1.5" fill="none" stroke-linecap="butt"/>
</svg>
<span id="t10" style="position:absolute;left:1599.8px;top:10.02px;font-size:13.33px;line-height:1;white-space:nowrap;color:#d4b8b8;transform-origin:0 0;letter-spacing:0.25px;">...</span>
</div>
<div id="popup" style="position:absolute;left:876px;top:88px;width:675px;height:495px;overflow:hidden;background:#f4f4f4">
<div style="position:absolute;left:0px;top:0px;width:675px;height:45px;background:#d6d6d6;"></div>
<div style="position:absolute;left:0px;top:45px;width:280px;height:450px;background:#e6e6e6;"></div>
<div style="position:absolute;left:280px;top:45px;width:1px;height:450px;background:#d0d0d0;"></div>
<div style="position:absolute;left:281px;top:45px;width:394px;height:45px;background:#c5dcc4;"></div>
<div style="position:absolute;left:0px;top:89px;width:280px;height:1px;background:#d0d0d0;"></div>
<span id="t64" style="position:absolute;left:47.700000000000045px;top:58.80px;font-size:15px;line-height:1;white-space:nowrap;color:#333;transform-origin:0 0;transform:scaleX(1.0176);-webkit-text-stroke:0.25px #333;">Dokumenty handlowe</span>
<div style="position:absolute;left:0px;top:134px;width:280px;height:1px;background:#d0d0d0;"></div>
<span id="t65" style="position:absolute;left:47.700000000000045px;top:103.80px;font-size:15px;line-height:1;white-space:nowrap;color:#333;transform-origin:0 0;transform:scaleX(0.9859);-webkit-text-stroke:0.25px #333;">Narzędziowe</span>
<div style="position:absolute;left:0px;top:179px;width:280px;height:1px;background:#d0d0d0;"></div>
<span id="t66" style="position:absolute;left:47.700000000000045px;top:148.80px;font-size:15px;line-height:1;white-space:nowrap;color:#333;transform-origin:0 0;transform:scaleX(0.8476);-webkit-text-stroke:0.25px #333;">KSeF</span>
<div style="position:absolute;left:0px;top:180px;width:280px;height:44px;background:#0a7203;"></div>
<div style="position:absolute;left:0px;top:224px;width:280px;height:1px;background:#d0d0d0;"></div>
<span id="t67" style="position:absolute;left:47.700000000000045px;top:193.80px;font-size:15px;line-height:1;white-space:nowrap;color:#f4f4f4;font-weight:700;transform-origin:0 0;transform:scaleX(0.9462);">Dokument handlowy</span>
<div style="position:absolute;left:0px;top:269px;width:280px;height:1px;background:#d0d0d0;"></div>
<span id="t68" style="position:absolute;left:47.700000000000045px;top:238.80px;font-size:15px;line-height:1;white-space:nowrap;color:#333;transform-origin:0 0;transform:scaleX(1.0251);-webkit-text-stroke:0.25px #333;">Eksport dokumentu</span>
<div style="position:absolute;left:0px;top:314px;width:280px;height:1px;background:#d0d0d0;"></div>
<span id="t69" style="position:absolute;left:47.700000000000045px;top:283.80px;font-size:15px;line-height:1;white-space:nowrap;color:#333;transform-origin:0 0;transform:scaleX(0.9817);-webkit-text-stroke:0.25px #333;">Relacja wiązania</span>
<div style="position:absolute;left:0px;top:359px;width:280px;height:1px;background:#d0d0d0;"></div>
<span id="t70" style="position:absolute;left:47.700000000000045px;top:328.80px;font-size:15px;line-height:1;white-space:nowrap;color:#333;transform-origin:0 0;transform:scaleX(0.9579);-webkit-text-stroke:0.25px #333;">Procedury VAT</span>
<div style="position:absolute;left:0px;top:404px;width:280px;height:1px;background:#d0d0d0;"></div>
<span id="t71" style="position:absolute;left:47.700000000000045px;top:373.80px;font-size:15px;line-height:1;white-space:nowrap;color:#333;transform-origin:0 0;transform:scaleX(0.9594);-webkit-text-stroke:0.25px #333;">Relacje</span>
<div style="position:absolute;left:0px;top:449px;width:280px;height:1px;background:#d0d0d0;"></div>
<span id="t72" style="position:absolute;left:47.700000000000045px;top:418.80px;font-size:15px;line-height:1;white-space:nowrap;color:#333;transform-origin:0 0;transform:scaleX(0.9953);-webkit-text-stroke:0.25px #333;">Opakowania</span>
<span id="t73" style="position:absolute;left:291.79999999999995px;top:60.30px;font-size:15px;line-height:1;white-space:nowrap;color:#3a3a3a;transform-origin:0 0;transform:scaleX(1.0162);">Kopiuj dokument ...</span>
<span id="t74" style="position:absolute;left:291.79999999999995px;top:105.15px;font-size:15px;line-height:1;white-space:nowrap;color:#3a3a3a;transform-origin:0 0;transform:scaleX(1.0206);">Płatności kontrahenta...</span>
<span id="t75" style="position:absolute;left:291.79999999999995px;top:150.00px;font-size:15px;line-height:1;white-space:nowrap;color:#3a3a3a;transform-origin:0 0;transform:scaleX(1.0006);">Aktualizuj grupy towarowe VAT</span>
<span id="t76" style="position:absolute;left:291.79999999999995px;top:194.85px;font-size:15px;line-height:1;white-space:nowrap;color:#3a3a3a;transform-origin:0 0;transform:scaleX(1.0154);">Dokument ewidencji...</span>
<span id="t77" style="position:absolute;left:48.5px;top:15.88px;font-size:14.67px;line-height:1;white-space:nowrap;color:#333;transform-origin:0 0;">szukaj...</span>
<svg width="675" height="495" viewBox="876 88 675 495" fill="none" stroke-linecap="round" stroke-linejoin="round">
<circle cx="896.2" cy="108.6" r="8.4" stroke="#333" stroke-width="1.3" fill="none"/><path d="M902.2 114.6 L909.2 121.4" stroke="#333" stroke-width="1.3" fill="none" />
<path d="M895.4 152 H911.6" stroke="#333" stroke-width="1.4" fill="none" stroke-linecap="butt"/><circle cx="889.6" cy="152" r="1.25" fill="#333"/>
<path d="M895.4 157.5 H911.6" stroke="#333" stroke-width="1.4" fill="none" stroke-linecap="butt"/><circle cx="889.6" cy="157.5" r="1.25" fill="#333"/>
<path d="M895.4 163 H911.6" stroke="#333" stroke-width="1.4" fill="none" stroke-linecap="butt"/><circle cx="889.6" cy="163" r="1.25" fill="#333"/>
<path d="M893.4 193.8 V189.8 C891.6 190.6 890.6 192.4 890.6 194 C890.6 196 891.8 197.4 893.4 198 V208.4 Q893.4 210.5 895.5 210.5 Q897.6 210.5 897.6 208.4 V198 C899.2 197.4 900.4 196 900.4 194 C900.4 192.4 899.4 190.6 897.6 189.8 V193.8 Q897.6 195 896.4 195 H894.6 Q893.4 195 893.4 193.8 Z" stroke="#333" stroke-width="1.45" fill="none" />
<path d="M906.6 191.5 V199.4" stroke="#333" stroke-width="1.45" fill="none" /><rect x="903.6" y="199.6" width="6" height="10.8" rx="1.2" stroke="#333" stroke-width="1.45" fill="none"/><circle cx="906.6" cy="190.4" r="1" stroke="#333" stroke-width="1.1" fill="none"/>
<g transform="translate(886.69 231.75) scale(1.1429 1.1122)"><path d="M14.7 6.3a1 1 0 0 0 0 1.4l1.6 1.6a1 1 0 0 0 1.4 0l3.77-3.77a6 6 0 0 1-7.94 7.94l-6.91 6.91a2.12 2.12 0 0 1-3-3l6.91-6.91a6 6 0 0 1 7.94-7.94l-3.76 3.76z" stroke="#333" stroke-width="1.356" fill="none"/></g>
<g transform="translate(886.69 321.75) scale(1.1429 1.1122)"><path d="M14.7 6.3a1 1 0 0 0 0 1.4l1.6 1.6a1 1 0 0 0 1.4 0l3.77-3.77a6 6 0 0 1-7.94 7.94l-6.91 6.91a2.12 2.12 0 0 1-3-3l6.91-6.91a6 6 0 0 1 7.94-7.94l-3.76 3.76z" stroke="#333" stroke-width="1.356" fill="none"/></g>
<g transform="translate(886.69 366.75) scale(1.1429 1.1122)"><path d="M14.7 6.3a1 1 0 0 0 0 1.4l1.6 1.6a1 1 0 0 0 1.4 0l3.77-3.77a6 6 0 0 1-7.94 7.94l-6.91 6.91a2.12 2.12 0 0 1-3-3l6.91-6.91a6 6 0 0 1 7.94-7.94l-3.76 3.76z" stroke="#333" stroke-width="1.356" fill="none"/></g>
<g transform="translate(886.69 411.75) scale(1.1429 1.1122)"><path d="M14.7 6.3a1 1 0 0 0 0 1.4l1.6 1.6a1 1 0 0 0 1.4 0l3.77-3.77a6 6 0 0 1-7.94 7.94l-6.91 6.91a2.12 2.12 0 0 1-3-3l6.91-6.91a6 6 0 0 1 7.94-7.94l-3.76 3.76z" stroke="#333" stroke-width="1.356" fill="none"/></g>
<g transform="translate(886.69 456.75) scale(1.1429 1.1122)"><path d="M14.7 6.3a1 1 0 0 0 0 1.4l1.6 1.6a1 1 0 0 0 1.4 0l3.77-3.77a6 6 0 0 1-7.94 7.94l-6.91 6.91a2.12 2.12 0 0 1-3-3l6.91-6.91a6 6 0 0 1 7.94-7.94l-3.76 3.76z" stroke="#333" stroke-width="1.356" fill="none"/></g>
<g transform="translate(886.69 501.75) scale(1.1429 1.1122)"><path d="M14.7 6.3a1 1 0 0 0 0 1.4l1.6 1.6a1 1 0 0 0 1.4 0l3.77-3.77a6 6 0 0 1-7.94 7.94l-6.91 6.91a2.12 2.12 0 0 1-3-3l6.91-6.91a6 6 0 0 1 7.94-7.94l-3.76 3.76z" stroke="#333" stroke-width="1.356" fill="none"/></g>
<path d="M911.6 290.4 V301.2 H889.4 V279.4 H903.6" stroke="#f2f2f2" stroke-width="1.4" fill="none" /><path d="M894.2 289.4 L899.8 296.6 L911.4 278.8" stroke="#f2f2f2" stroke-width="1.5" fill="none" />
</svg>
</div>
</body>
</html>
